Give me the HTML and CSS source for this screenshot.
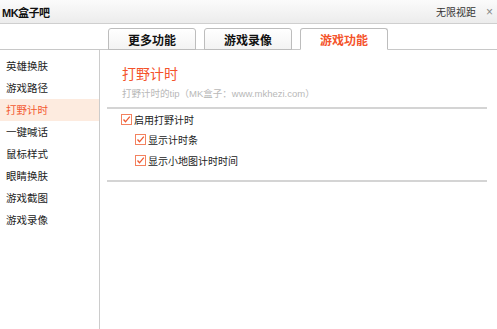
FILE: index.html
```html
<!DOCTYPE html>
<html lang="zh-CN">
<head>
  <meta charset="UTF-8">
  <title>MK盒子吧</title>
  <link rel="stylesheet" href="styles.css">
</head>
<body>
  <div class="window">
    <div class="titlebar">
      <span class="app-name">MK盒子吧</span>
      <span class="title-right">
        <span class="title-link">无限视距</span>
        <span class="close">×</span>
      </span>
    </div>

    <div class="tabs">
      <div class="tab">更多功能</div>
      <div class="tab">游戏录像</div>
      <div class="tab active">游戏功能</div>
    </div>

    <div class="main">
      <ul class="sidebar">
        <li>英雄换肤</li>
        <li>游戏路径</li>
        <li class="current">打野计时</li>
        <li>一键喊话</li>
        <li>鼠标样式</li>
        <li>眼睛换肤</li>
        <li>游戏截图</li>
        <li>游戏录像</li>
      </ul>

      <div class="content">
        <div class="panel-head">
          <h1>打野计时</h1>
          <p class="tip">打野计时的tip（MK盒子：www.mkhezi.com）</p>
        </div>
        <div class="options">
          <label class="option">
            <svg class="check" viewBox="0 0 11 11" width="11" height="11"><rect x="0.5" y="0.5" width="10" height="10" fill="#fff" stroke="#f3825f"/><path d="M2.5 5.5 L4.5 7.8 L8.8 2.6" fill="none" stroke="#ef5a32" stroke-width="1.3"/></svg>
            启用打野计时
          </label>
          <label class="option sub">
            <svg class="check" viewBox="0 0 11 11" width="11" height="11"><rect x="0.5" y="0.5" width="10" height="10" fill="#fff" stroke="#f3825f"/><path d="M2.5 5.5 L4.5 7.8 L8.8 2.6" fill="none" stroke="#ef5a32" stroke-width="1.3"/></svg>
            显示计时条
          </label>
          <label class="option sub">
            <svg class="check" viewBox="0 0 11 11" width="11" height="11"><rect x="0.5" y="0.5" width="10" height="10" fill="#fff" stroke="#f3825f"/><path d="M2.5 5.5 L4.5 7.8 L8.8 2.6" fill="none" stroke="#ef5a32" stroke-width="1.3"/></svg>
            显示小地图计时时间
          </label>
        </div>
      </div>
    </div>
  </div>
</body>
</html>
```

FILE: styles.css
```css
body {
  margin: 0;
  padding: 0;
  font-family: "Liberation Sans", "Noto Sans CJK SC", sans-serif;
  background-color: #ffffff;
  color: #222222;
}

.window {
  width: 497px;
  height: 329px;
  display: flex;
  flex-direction: column;
  overflow: hidden;
}

.titlebar {
  height: 23px;
  flex-shrink: 0;
  display: flex;
  align-items: center;
  justify-content: space-between;
  padding: 0 4px 0 2px;
  background: linear-gradient(#fbfbfb, #ececec);
  border-bottom: 1px solid #cfcfcf;
}

.app-name {
  font-size: 11px;
  font-weight: bold;
  letter-spacing: -0.5px;
  color: #111111;
}

.title-right {
  display: flex;
  align-items: center;
  gap: 10px;
}

.title-link {
  font-size: 10px;
  color: #333333;
}

.close {
  font-size: 12px;
  color: #888888;
}

.tabs {
  height: 26px;
  flex-shrink: 0;
  display: flex;
  align-items: flex-end;
  gap: 8px;
  padding-left: 108px;
  border-bottom: 1px solid #c8c8c8;
  box-sizing: border-box;
}

.tab {
  width: 88px;
  height: 22px;
  box-sizing: border-box;
  margin-bottom: -1px;
  border: 1px solid #bdbdbd;
  border-radius: 3px 3px 0 0;
  background: linear-gradient(#ffffff, #f3f3f3);
  font-size: 12px;
  font-weight: bold;
  color: #111111;
  display: flex;
  align-items: center;
  justify-content: center;
}

.tab.active {
  background: #ffffff;
  border-bottom-color: #ffffff;
  color: #f4532b;
}

.main {
  flex: 1;
  display: flex;
}

.sidebar {
  width: 99px;
  margin: 0;
  padding: 5px 0 0 0;
  list-style: none;
  border-right: 1px solid #cccccc;
}

.sidebar li {
  height: 22px;
  line-height: 22px;
  padding-left: 6px;
  font-size: 10.5px;
  color: #222222;
}

.sidebar li.current {
  background-color: #fdebdf;
  color: #f3592f;
}

.content {
  flex: 1;
  padding: 14px 10px 0 7px;
}

.panel-head {
  padding-left: 15px;
  padding-bottom: 6px;
  border-bottom: 2px solid #d4d4d4;
}

h1 {
  margin: 0;
  font-size: 14px;
  line-height: 20px;
  font-weight: normal;
  color: #f4532b;
}

.tip {
  margin: 3px 0 0 0;
  font-size: 9.5px;
  line-height: 14px;
  color: #b8b8b8;
}

.options {
  padding: 0 0 9px 14px;
  border-bottom: 2px solid #d4d4d4;
}

.option {
  display: flex;
  align-items: center;
  gap: 2px;
  height: 20.5px;
  font-size: 10px;
  color: #222222;
}

.option.sub {
  padding-left: 14px;
}

.check {
  display: block;
  flex-shrink: 0;
}
```
